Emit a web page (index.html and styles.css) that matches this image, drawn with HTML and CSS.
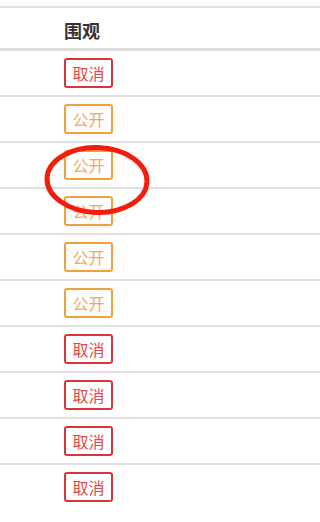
FILE: index.html
```html
<!DOCTYPE html>
<html lang="zh-CN">
<head>
<meta charset="utf-8">
<link rel="stylesheet" href="styles.css">
</head>
<body>
<div class="table">
  <div class="head"><span class="th">围观</span></div>
  <div class="row"><span class="btn cancel">取消</span></div>
  <div class="row"><span class="btn open">公开</span></div>
  <div class="row"><span class="btn open">公开</span></div>
  <div class="row"><span class="btn open">公开</span></div>
  <div class="row"><span class="btn open">公开</span></div>
  <div class="row"><span class="btn open">公开</span></div>
  <div class="row"><span class="btn cancel">取消</span></div>
  <div class="row"><span class="btn cancel">取消</span></div>
  <div class="row"><span class="btn cancel">取消</span></div>
  <div class="row last"><span class="btn cancel">取消</span></div>
  <svg class="mark" width="120" height="80" viewBox="0 0 120 80">
    <ellipse cx="60" cy="40" rx="50" ry="32.5" transform="rotate(2 60 40)" fill="none" stroke="#f41d0c" stroke-width="5"/>
  </svg>
</div>
</body>
</html>
```

FILE: styles.css
```css
html, body {
  margin: 0;
  padding: 0;
  background: #fff;
}
body {
  font-family: "Noto Sans CJK SC", "Noto Sans", sans-serif;
  overflow: hidden;
}
.table {
  position: relative;
  padding-top: 6px;
}
.head {
  border-top: 2px solid #e3e3e3;
  border-bottom: 3px solid #dcdcdc;
  height: 40px;
  display: flex;
  align-items: center;
  padding-left: 64px;
}
.th {
  font-size: 18px;
  font-weight: bold;
  color: #333;
  line-height: 1;
  margin-top: 3px;
}
.row {
  padding: 7px 0 7px 64px;
  border-bottom: 2px solid #e0e0e0;
  display: flex;
}
.row.last {
  border-bottom: none;
}
.btn {
  box-sizing: border-box;
  width: 49px;
  height: 30px;
  border: 2px solid;
  border-radius: 3px;
  font-size: 16px;
  line-height: 26px;
  text-align: center;
}
.cancel {
  border-color: #d8373a;
  color: #de4a4b;
}
.open {
  border-color: #f0a03c;
  color: #f3a85a;
}
.mark {
  position: absolute;
  left: 37px;
  top: 140px;
}
```
